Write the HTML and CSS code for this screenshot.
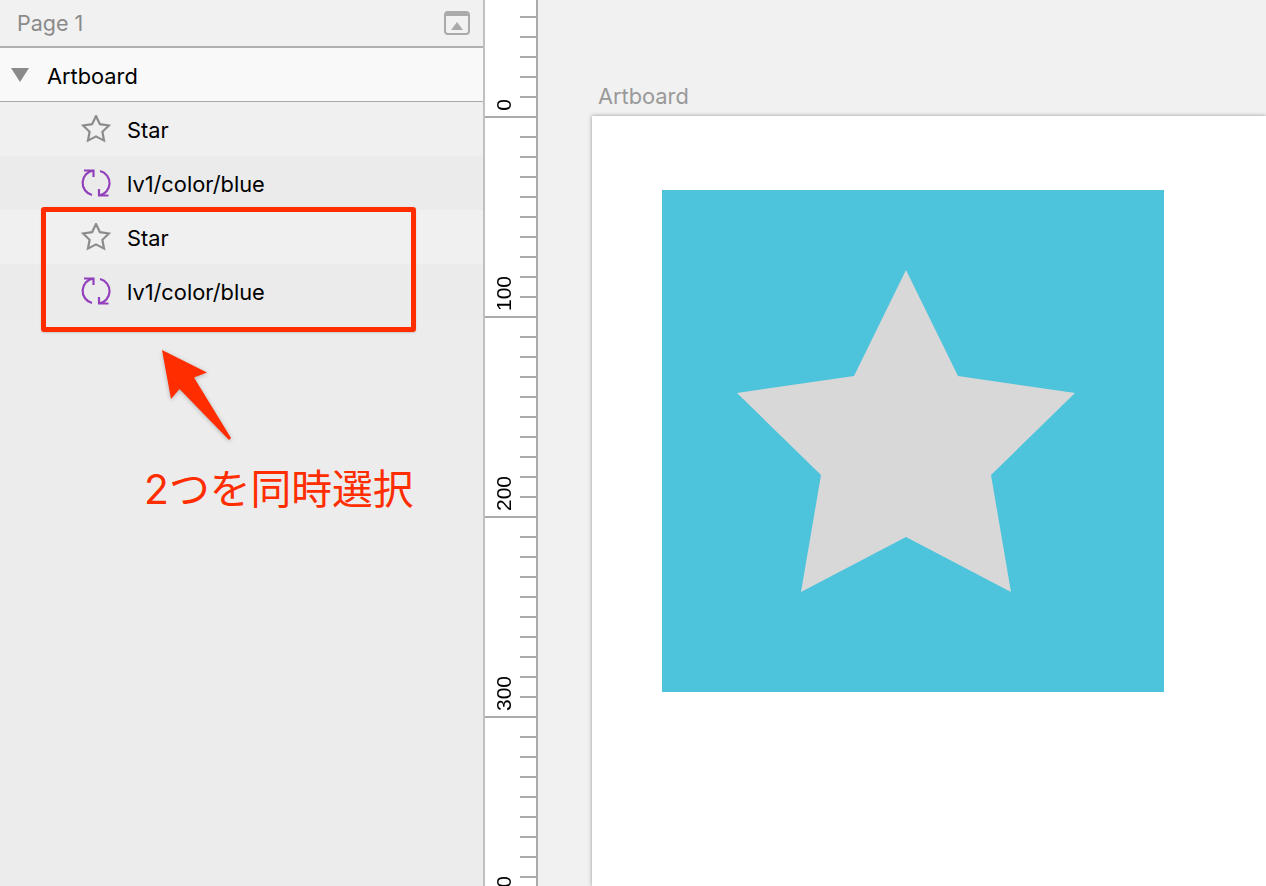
FILE: index.html
```html
<!DOCTYPE html>
<html lang="ja">
<head>
    <meta charset="UTF-8">
    <meta name="viewport" content="width=device-width, initial-scale=1.0">
    <title>Artboard</title>
    <link rel="stylesheet" href="styles.css">
</head>
<body>
    <!-- Layer list -->
    <aside class="sidebar">
        <header class="page-header">
            <span class="page-name">Page 1</span>
            <svg class="collapse-icon" width="28" height="26" viewBox="0 0 28 26">
                <rect x="2" y="2" width="24" height="22" rx="3" fill="none" stroke="#aaa" stroke-width="2"/>
                <rect x="2" y="2" width="24" height="4" fill="#aaa"/>
                <path d="M8 20 L14 12 L20 20 Z" fill="#aaa"/>
            </svg>
        </header>
        <div class="group-row">
            <span class="disclosure"></span>
            <span class="layer-name">Artboard</span>
        </div>
        <ul class="layers">
            <li class="layer">
                <svg class="layer-icon" width="30" height="28" viewBox="0 1 30 28">
                    <path class="star-line" d="M15 2 L18.9 10.2 L28 11.5 L21.4 17.8 L23 26.6 L15 22.4 L7 26.6 L8.6 17.8 L2 11.5 L11.1 10.2 Z"/>
                </svg>
                <span class="layer-name">Star</span>
            </li>
            <li class="layer">
                <svg class="layer-icon" width="30" height="28" viewBox="0 0 30 28">
                    <path class="sync-line" d="M3 1.5 H12.5 V8 M12.5 1.5 A12.5 12.5 0 0 0 11 26 M19 2 A12.5 12.5 0 0 1 18 26.5 M18 20 V26.5 H27.5"/>
                </svg>
                <span class="layer-name">lv1/color/blue</span>
            </li>
            <li class="layer">
                <svg class="layer-icon" width="30" height="28" viewBox="0 1 30 28">
                    <path class="star-line" d="M15 2 L18.9 10.2 L28 11.5 L21.4 17.8 L23 26.6 L15 22.4 L7 26.6 L8.6 17.8 L2 11.5 L11.1 10.2 Z"/>
                </svg>
                <span class="layer-name">Star</span>
            </li>
            <li class="layer">
                <svg class="layer-icon" width="30" height="28" viewBox="0 0 30 28">
                    <path class="sync-line" d="M3 1.5 H12.5 V8 M12.5 1.5 A12.5 12.5 0 0 0 11 26 M19 2 A12.5 12.5 0 0 1 18 26.5 M18 20 V26.5 H27.5"/>
                </svg>
                <span class="layer-name">lv1/color/blue</span>
            </li>
        </ul>

        <!-- Annotation drawn over the list -->
        <div class="callout-box"></div>
        <svg class="callout-arrow" width="80" height="100" viewBox="0 0 80 100">
            <path d="M1 1 L46 23.5 L33 28.5 L70 89 L68 91 L18.5 40 L10 50 Z"/>
        </svg>
        <p class="callout-text">2つを同時選択</p>
    </aside>

    <!-- Vertical ruler -->
    <div class="ruler">
        <div class="ruler-section"><span class="ruler-label">0</span></div>
        <div class="ruler-section"><span class="ruler-label">100</span></div>
        <div class="ruler-section"><span class="ruler-label">200</span></div>
        <div class="ruler-section"><span class="ruler-label">300</span></div>
        <div class="ruler-section"><span class="ruler-label">400</span></div>
    </div>

    <!-- Canvas -->
    <main class="canvas">
        <div class="artboard-title">Artboard</div>
        <div class="artboard">
            <div class="blue-square">
                <svg class="big-star" width="338" height="322" viewBox="0 0 338 322">
                    <path d="M169 0 L221 106 L338 123 L254 205 L274 322 L169 267 L64 322 L84 205 L0 123 L117 106 Z"/>
                </svg>
            </div>
        </div>
    </main>
</body>
</html>
```

FILE: styles.css
```css
/* Page */
html, body {
    height: 100%;
}

body {
    margin: 0;
    height: 886px;
    display: flex;
    overflow: hidden;
    background-color: #f1f1f1;
    font-family: Inter, "Noto Sans CJK JP", sans-serif;
}

/* Sidebar */
.sidebar {
    position: relative;
    flex: 0 0 483px;
    background-color: #ececec;
}

.page-header {
    height: 46px;
    padding: 0 12px 0 17px;
    display: flex;
    align-items: center;
    justify-content: space-between;
    background-color: #f1f1f1;
    border-bottom: 2px solid #b0b0b0;
}

.page-name {
    font-size: 21.5px;
    color: #8a8a8a;
}

.collapse-icon {
    display: block;
}

.group-row {
    height: 53px;
    padding-left: 11px;
    display: flex;
    align-items: center;
    background-color: #f9f9f9;
    border-bottom: 1px solid #aaa;
}

.disclosure {
    width: 0;
    height: 0;
    margin-top: 1px;
    margin-right: 18px;
    border-left: 9px solid transparent;
    border-right: 9px solid transparent;
    border-top: 14px solid #8a8a8a;
}

.layer-name {
    margin-top: 2px;
    font-size: 21.8px;
    color: #000;
}

.group-row .layer-name {
    margin-top: 2px;
}

.layers {
    list-style: none;
    margin: 0;
    padding: 0;
}

.layer {
    height: 54px;
    padding-left: 81px;
    display: flex;
    align-items: center;
    gap: 16px;
    background-color: #ebebeb;
}

.layer:nth-child(odd) {
    background-color: #f0f0f0;
}

.layer-icon {
    display: block;
}

.star-line {
    fill: none;
    stroke: #8c8c8c;
    stroke-width: 2.2;
}

.sync-line {
    fill: none;
    stroke: #9340bd;
    stroke-width: 2.2;
}

/* Annotation */
.callout-box {
    position: absolute;
    left: 41px;
    top: 207px;
    width: 365px;
    height: 115px;
    border: 5.5px solid #ff2d00;
    border-radius: 3px;
    box-shadow: 0 1px 2px rgba(0, 0, 0, 0.15);
}

.callout-arrow {
    position: absolute;
    left: 161px;
    top: 349px;
    filter: drop-shadow(0 1px 2px rgba(0, 0, 0, 0.25));
}

.callout-arrow path {
    fill: #ff2d00;
}

.callout-text {
    position: absolute;
    left: 144px;
    top: 460px;
    margin: 0;
    font-size: 40.8px;
    font-weight: 400;
    line-height: 58px;
    white-space: nowrap;
    color: #ff2d00;
}

/* Ruler */
.ruler {
    flex: 0 0 51px;
    height: 886px;
    overflow: hidden;
    background-color: #fff;
    border-left: 2px solid #c0c0c0;
    border-right: 2px solid #aaa;
    background-image: linear-gradient(#aaa 2px, transparent 2px);
    background-size: 16px 20px;
    background-repeat: repeat-y;
    background-position: right 16px;
}

.ruler-section {
    height: 200px;
    box-sizing: border-box;
    display: flex;
    flex-direction: column;
    justify-content: flex-end;
    padding: 0 0 5px 9px;
    border-bottom: 2px solid #aaa;
}

.ruler-section:first-child {
    margin-top: -82px;
}

.ruler-label {
    writing-mode: vertical-rl;
    transform: rotate(180deg);
    align-self: flex-start;
    font-family: "Liberation Sans", sans-serif;
    font-size: 21px;
    line-height: 20px;
    color: #000;
}

/* Canvas */
.canvas {
    flex: 1;
    min-width: 0;
    padding-left: 54px;
}

.artboard-title {
    height: 116px;
    box-sizing: border-box;
    padding: 83px 0 0 6px;
    font-size: 21.8px;
    line-height: 26px;
    color: #999;
}

.artboard {
    height: 770px;
    padding: 74px 0 0 70px;
    box-sizing: border-box;
    background-color: #fff;
    box-shadow: 0 0 4px rgba(0, 0, 0, 0.4);
}

.blue-square {
    width: 502px;
    height: 502px;
    padding: 80px 0 0 75px;
    box-sizing: border-box;
    background-color: #4dc3dc;
}

.big-star {
    display: block;
}

.big-star path {
    fill: #d8d8d8;
}
```
